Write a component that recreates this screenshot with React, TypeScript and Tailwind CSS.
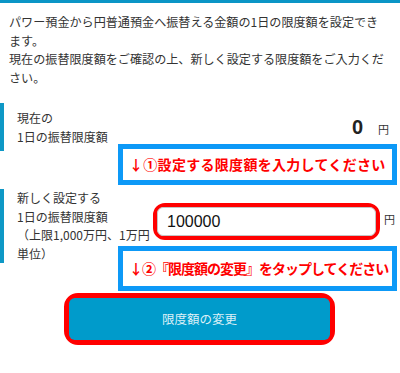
const jp = "font-['Hiragino_Sans','Noto_Sans_CJK_JP',sans-serif]";

function Callout({ top, height, children }: { top: string; height: string; children: React.ReactNode }) {
  return (
    <div
      className={`absolute left-[118px] ${top} ${height} flex w-[279px] items-center whitespace-nowrap border-[5px] border-[#0d99f7] bg-white pl-[6px] text-[14px] font-bold text-[#ff0000]`}
    >
      {children}
    </div>
  );
}

export default function App() {
  return (
    <div className={`relative h-[373px] w-[400px] overflow-hidden bg-white text-[#333] ${jp}`}>
      <div className="h-[3px] bg-[#0b95c6]" />

      <p className="mt-[10px] whitespace-nowrap px-[9px] text-[12.1px] leading-[18.5px]">
        パワー預金から円普通預金へ振替える金額の1日の限度額を設定でき
        <br />
        ます。
        <br />
        現在の振替限度額をご確認の上、新しく設定する限度額をご入力くだ
        <br />
        さい。
      </p>

      <div className="mt-[16px] flex h-[48px] items-center border-l-4 border-[#0e98c6] pl-[13px] pr-[11px]">
        <div className="text-[12px] leading-[19px]">
          現在の
          <br />
          1日の振替限度額
        </div>
        <div className="ml-auto flex items-baseline gap-[15px]">
          <span className="font-['Liberation_Sans',sans-serif] text-[20px] font-bold text-[#222]">0</span>
          <span className="text-[11px]">円</span>
        </div>
      </div>

      <div className="mt-[38px] flex h-[74px] border-l-4 border-[#0e98c6]">
        <div className="w-[149px] whitespace-nowrap pl-[13px] text-[12px] leading-[18.5px]">
          新しく設定する
          <br />
          1日の振替限度額
          <br />
          （上限1,000万円、1万円
          <br />
          単位）
        </div>
        <div className="mt-[14px] h-[37px] w-[227px] rounded-[12px] border-4 border-[#ff0000]">
          <input
            readOnly
            value="100000"
            className="h-full w-full rounded-[6px] border border-[#c4c4c4] bg-white px-[9px] font-['Liberation_Sans',sans-serif] text-[16px] text-[#111] outline-none"
          />
        </div>
        <span className="ml-[4px] mt-[25px] text-[11px] leading-none">円</span>
      </div>

      <div className="ml-[64px] mt-[30px] h-[52px] w-[271px] rounded-[14px] border-[5px] border-[#ff0000]">
        <button className="flex h-full w-full items-center justify-center rounded-[6px] bg-[#009bcb] text-[12.5px] text-[#dcf0f7]">
          限度額の変更
        </button>
      </div>

      <Callout top="top-[144px]" height="h-[41px]">
        <span className="tracking-[0.3px]">↓①設定する限度額を入力してください</span>
      </Callout>
      <Callout top="top-[246px]" height="h-[45px]">
        <span className="tracking-[-1px]">↓②『限度額の変更』をタップしてください</span>
      </Callout>
    </div>
  );
}
